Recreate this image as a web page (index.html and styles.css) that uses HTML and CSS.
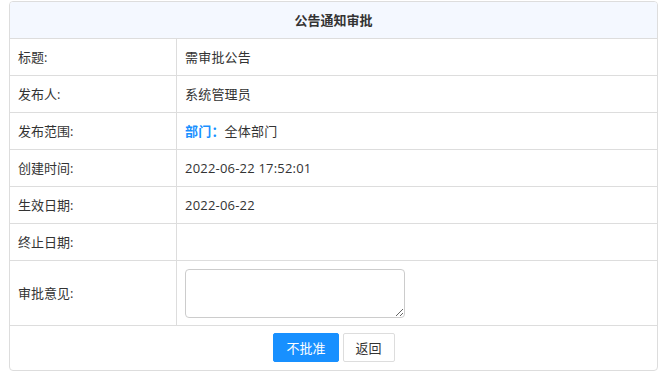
FILE: index.html
```html
<!DOCTYPE html>
<html lang="zh-CN">
<head>
    <meta charset="UTF-8">
    <meta name="viewport" content="width=device-width, initial-scale=1.0">
    <title>公告通知审批</title>
    <link rel="stylesheet" href="styles.css">
</head>
<body>
    <div class="panel">
        <div class="panel-head">公告通知审批</div>
        <div class="row">
            <div class="label">标题:</div>
            <div class="value">需审批公告</div>
        </div>
        <div class="row">
            <div class="label">发布人:</div>
            <div class="value">系统管理员</div>
        </div>
        <div class="row">
            <div class="label">发布范围:</div>
            <div class="value"><span class="scope">部门：</span>全体部门</div>
        </div>
        <div class="row">
            <div class="label">创建时间:</div>
            <div class="value">2022-06-22 17:52:01</div>
        </div>
        <div class="row">
            <div class="label">生效日期:</div>
            <div class="value">2022-06-22</div>
        </div>
        <div class="row">
            <div class="label">终止日期:</div>
            <div class="value"></div>
        </div>
        <div class="row row-tall">
            <div class="label">审批意见:</div>
            <div class="value">
                <textarea class="opinion"></textarea>
            </div>
        </div>
        <div class="actions">
            <button class="btn btn-primary">不批准</button>
            <button class="btn btn-default">返回</button>
        </div>
    </div>
</body>
</html>
```

FILE: styles.css
```css
body {
    font-family: "Open Sans", "Noto Sans CJK SC", sans-serif;
    font-size: 13px;
    color: #333;
    margin: 0;
    padding: 1px 9px 0;
}
.panel {
    border: 1px solid #ddd;
    border-radius: 4px;
    overflow: hidden;
}
.panel-head {
    height: 36px;
    line-height: 36px;
    text-align: center;
    font-weight: bold;
    background: #f4f8ff;
    border-bottom: 1px solid #ddd;
}
.row {
    display: grid;
    grid-template-columns: 167px 1fr;
    min-height: 36px;
    border-bottom: 1px solid #ddd;
}
.label {
    display: flex;
    align-items: center;
    padding: 0 8px 1px;
    border-right: 1px solid #ddd;
}
.value {
    display: flex;
    align-items: center;
    padding: 0 8px 1px;
    letter-spacing: 0.2px;
}
.scope {
    color: #1890ff;
    font-weight: bold;
}
.row-tall .value {
    padding: 8px 8px 7px;
}
.opinion {
    width: 220px;
    height: 49px;
    box-sizing: border-box;
    border: 1px solid #ccc;
    border-radius: 4px;
    margin: 0;
}
.actions {
    display: flex;
    justify-content: center;
    gap: 4px;
    padding: 7px 0 8px;
    margin-left: 1px;
}
.btn {
    height: 29px;
    padding: 0 12px;
    font-family: inherit;
    font-size: 13px;
    border-radius: 2px;
    cursor: pointer;
}
.btn-primary {
    background: #1890ff;
    border: 1px solid #1890ff;
    color: #fff;
}
.btn-default {
    background: #fff;
    border: 1px solid #ddd;
    color: #333;
}
```
